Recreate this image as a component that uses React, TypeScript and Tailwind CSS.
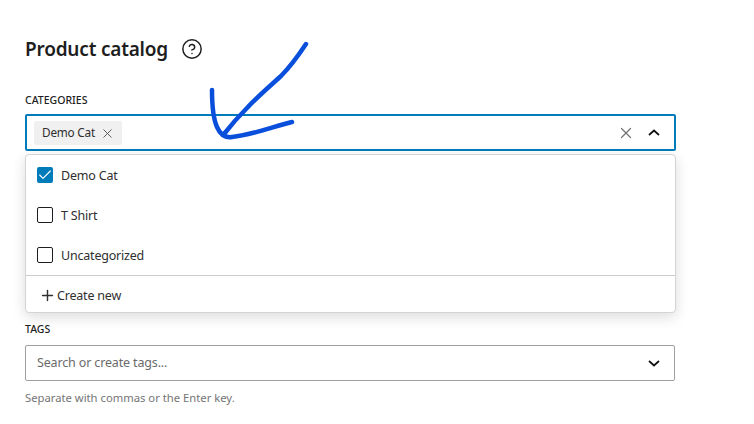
import { Check, CircleHelp, Plus, X } from "lucide-react";

const categories = [
  { name: "Demo Cat", checked: true },
  { name: "T Shirt", checked: false },
  { name: "Uncategorized", checked: false },
];

function Chevron({ up }: { up?: boolean }) {
  return (
    <svg width="12" height="7" viewBox="0 0 12 7" fill="none" className="text-[#111]">
      <path d={up ? "M1 6 L6 1.5 L11 6" : "M1 1 L6 5.5 L11 1"} stroke="currentColor" strokeWidth="1.7" />
    </svg>
  );
}

export default function App() {
  return (
    <div className="relative h-[424px] w-[754px] overflow-hidden bg-white pl-[25px] pt-[35px] font-['Noto_Sans',sans-serif] text-[#1e1e1e]">
      <div className="flex h-[28px] items-center">
        <h1 className="text-[19px] leading-[28px] font-semibold tracking-[-0.2px]">Product catalog</h1>
        <CircleHelp className="ml-[13px] h-[22px] w-[22px] text-[#1e1e1e]" strokeWidth={1.6} />
      </div>

      <label className="mt-[29px] block h-[16px] text-[10.5px] leading-[16px] font-medium">CATEGORIES</label>
      <div className="mt-[6px] flex h-[37px] w-[651px] items-center rounded-[2px] border-2 border-[#007cba] pl-[7px] pr-[14px]">
        <span className="flex h-[24px] items-center rounded-[2px] bg-[#f0f0f0] pl-[8px] pr-[7px] pt-[1px] text-[11.75px] tracking-[-0.2px] text-[#2f2f2f]">
          Demo Cat
          <X className="ml-[5px] h-[15px] w-[15px] text-[#555]" strokeWidth={1.5} />
        </span>
        <X className="ml-auto h-[18px] w-[18px] text-[#757575]" strokeWidth={1.7} />
        <span className="ml-[13px] flex">
          <Chevron up />
        </span>
      </div>

      <div className="mt-[3px] w-[651px] rounded-[4px] border border-[#d4d4d4] bg-white shadow-[0_4px_14px_rgba(0,0,0,0.14)]">
        {categories.map((c) => (
          <div key={c.name} className="flex h-[40px] items-center pl-[11px] text-[12.5px] tracking-[-0.2px] text-[#2f2f2f]">
            <span
              className={
                c.checked
                  ? "flex h-[16px] w-[16px] items-center justify-center rounded-[2px] bg-[#007cba]"
                  : "h-[16px] w-[16px] rounded-[2px] border border-[#1e1e1e] bg-white"
              }
            >
              {c.checked && <Check className="h-[16px] w-[16px] text-white" strokeWidth={1.7} />}
            </span>
            <span className="ml-[8px] pt-[2px]">{c.name}</span>
          </div>
        ))}
        <div className="flex h-[37px] items-center border-t border-[#cccccc] pl-[13px] pt-[2px] text-[12.5px] tracking-[-0.2px] text-[#2f2f2f]">
          <Plus className="h-[17px] w-[17px] text-[#2f2f2f]" strokeWidth={2} />
          <span className="ml-[1px] pt-[2px]">Create new</span>
        </div>
      </div>

      <label className="mt-[8px] block h-[16px] text-[10.5px] leading-[16px] font-medium">TAGS</label>
      <div className="mt-[8px] flex h-[36px] w-[650px] items-center rounded-[2px] border border-[#a0a0a0] pl-[11px] pr-[14px]">
        <span className="pt-[1px] text-[12.5px] tracking-[-0.15px] text-[#6b6b6b]">Search or create tags...</span>
        <span className="ml-auto flex">
          <Chevron />
        </span>
      </div>
      <p className="mt-[9px] text-[11.25px] leading-[16px] text-[#757575]">Separate with commas or the Enter key.</p>

      <svg className="pointer-events-none absolute left-0 top-0" width="754" height="424" fill="none">
        <path
          d="M306 44 C298 56 291 66 281 76 C270 86 257 97 247 108 C238 117 231 125 224 134"
          stroke="#0a4fdc"
          strokeWidth="4.5"
          strokeLinecap="round"
        />
        <path
          d="M212 90 C212 104 213 118 217 127 C220 134 225 138 232 137 C252 135 272 127 292 122"
          stroke="#0a4fdc"
          strokeWidth="4.5"
          strokeLinecap="round"
        />
      </svg>
    </div>
  );
}
